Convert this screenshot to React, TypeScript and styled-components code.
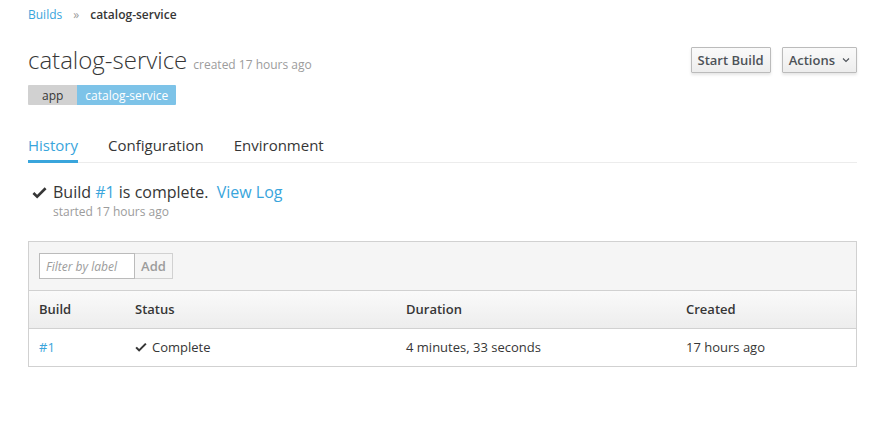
import React from "react";
import styled, { createGlobalStyle } from "styled-components";

const Global = createGlobalStyle`
  html, body { margin: 0; padding: 0; background: #fff; }
  body { font-family: "Open Sans", "Noto Sans", sans-serif; font-size: 12px; color: #363636; }
`;

const Page = styled.div`
  padding: 0 26px 0 28px;
  width: 883px;
  box-sizing: border-box;
`;

const Breadcrumb = styled.div`
  display: flex;
  align-items: center;
  gap: 11px;
  height: 28px;
  font-size: 12px;
`;

const Crumb = styled.a`
  color: #39a5dc;
  text-decoration: none;
`;

const Sep = styled.span`
  color: #9c9c9c;
  font-size: 12px;
`;

const Current = styled.span`
  font-weight: 600;
  color: #363636;
`;

const Header = styled.div`
  display: flex;
  justify-content: space-between;
  align-items: flex-start;
  margin-top: 17px;
`;

const TitleRow = styled.div`
  display: flex;
  align-items: baseline;
  gap: 6px;
`;

const Title = styled.h1`
  margin: 0;
  font-size: 24px;
  font-weight: 300;
  line-height: 30px;
  color: #363636;
`;

const Small = styled.span`
  font-size: 12px;
  color: #9c9c9c;
`;

const Buttons = styled.div`
  display: flex;
  gap: 11px;
  margin-top: 2px;
`;

const Button = styled.button`
  font-family: "Open Sans", sans-serif;
  font-size: 13px;
  font-weight: 600;
  color: #4d5258;
  height: 26px;
  padding: 0 6px;
  border: 1px solid #bbb;
  border-radius: 1px;
  background: linear-gradient(#fafafa, #ededed);
  box-shadow: 0 2px 3px rgba(3, 3, 3, 0.1);
  display: flex;
  align-items: center;
  gap: 7px;
`;

const Labels = styled.div`
  display: flex;
  margin-top: 10px;
`;

const Label = styled.span<{ $blue?: boolean }>`
  display: inline-flex;
  align-items: center;
  height: 20px;
  padding: 0 ${(p) => (p.$blue ? "8px" : "14px")};
  font-size: 12px;
  background: ${(p) => (p.$blue ? "#7dc3e8" : "#d1d1d1")};
  color: ${(p) => (p.$blue ? "#fff" : "#363636")};
  border-radius: ${(p) => (p.$blue ? "0 1px 1px 0" : "1px 0 0 1px")};
`;

const Tabs = styled.div`
  display: flex;
  gap: 30px;
  margin-top: 24px;
  border-bottom: 1px solid #ececec;
`;

const Tab = styled.div<{ $active?: boolean }>`
  font-size: 15px;
  line-height: 22px;
  height: 34px;
  padding-top: 5px;
  box-sizing: border-box;
  color: ${(p) => (p.$active ? "#39a5dc" : "#363636")};
  border-bottom: 3px solid ${(p) => (p.$active ? "#39a5dc" : "transparent")};
  margin-bottom: -1px;
`;

const Status = styled.div`
  margin-top: 18px;
  margin-left: 4px;
`;

const StatusLine = styled.div`
  display: flex;
  align-items: center;
  font-size: 16px;
  line-height: 22px;
  gap: 6px;
`;

const Link = styled.a`
  color: #39a5dc;
  text-decoration: none;
`;

const Started = styled.div`
  margin-left: 21px;
  font-size: 12px;
  color: #9c9c9c;
  line-height: 18px;
`;

const TableBox = styled.div`
  margin-top: 20px;
  border: 1px solid #d1d1d1;
`;

const Toolbar = styled.div`
  background: #f5f5f5;
  height: 48px;
  padding: 0 10px;
  display: flex;
  align-items: center;
  border-bottom: 1px solid #d1d1d1;
`;

const Input = styled.input`
  width: 96px;
  height: 26px;
  box-sizing: border-box;
  border: 1px solid #bbb;
  padding: 0 6px;
  font-family: "Open Sans", sans-serif;
  font-size: 12px;
  font-style: italic;
  background: #fff;
  &::placeholder { color: #9c9c9c; }
`;

const AddButton = styled.button`
  height: 26px;
  width: 38px;
  font-family: "Open Sans", sans-serif;
  font-weight: 600;
  font-size: 13px;
  color: #9c9c9c;
  border: 1px solid #d1d1d1;
  border-left: none;
  background: #f5f5f5;
`;

const Table = styled.table`
  width: 100%;
  border-collapse: collapse;
  table-layout: fixed;
  font-size: 13px;
`;

const Th = styled.th<{ $w?: number }>`
  box-sizing: border-box;
  text-align: left;
  font-weight: 600;
  height: 37px;
  padding: 0 10px;
  background: linear-gradient(#fafafa, #ededed);
  border-bottom: 1px solid #d1d1d1;
  width: ${(p) => (p.$w ? `${p.$w}px` : "auto")};
`;

const Td = styled.td`
  height: 37px;
  padding: 0 10px;
  color: #363636;
`;

const Check = ({ size = 13 }: { size?: number }) => (
  <svg width={size} height={size} viewBox="0 0 16 16">
    <path d="M1.5 8.5 L5.5 12.5 L14.5 3.5" fill="none" stroke="#363636" strokeWidth="2.8" />
  </svg>
);

const Chevron = () => (
  <svg width="8" height="6" viewBox="0 0 8 6">
    <path d="M1 1.5 L4 4.5 L7 1.5" fill="none" stroke="#4d5258" strokeWidth="1.1" />
  </svg>
);

const Cell = styled.span`
  display: inline-flex;
  align-items: center;
  gap: 5px;
`;

export default function App() {
  return (
    <>
      <Global />
      <Page>
        <Breadcrumb>
          <Crumb>Builds</Crumb>
          <Sep>»</Sep>
          <Current>catalog-service</Current>
        </Breadcrumb>
        <Header>
          <div>
            <TitleRow>
              <Title>catalog-service</Title>
              <Small>created 17 hours ago</Small>
            </TitleRow>
            <Labels>
              <Label>app</Label>
              <Label $blue>catalog-service</Label>
            </Labels>
          </div>
          <Buttons>
            <Button>Start Build</Button>
            <Button>
              Actions <Chevron />
            </Button>
          </Buttons>
        </Header>
        <Tabs>
          <Tab $active>History</Tab>
          <Tab>Configuration</Tab>
          <Tab>Environment</Tab>
        </Tabs>
        <Status>
          <StatusLine>
            <Check size={15} />
            <span>
              Build <Link>#1</Link> is complete.&nbsp; <Link>View Log</Link>
            </span>
          </StatusLine>
          <Started>started 17 hours ago</Started>
        </Status>
        <TableBox>
          <Toolbar>
            <Input placeholder="Filter by label" />
            <AddButton>Add</AddButton>
          </Toolbar>
          <Table>
            <thead>
              <tr>
                <Th $w={96}>Build</Th>
                <Th $w={271}>Status</Th>
                <Th $w={280}>Duration</Th>
                <Th>Created</Th>
              </tr>
            </thead>
            <tbody>
              <tr>
                <Td>
                  <Link>#1</Link>
                </Td>
                <Td>
                  <Cell>
                    <Check size={12} />
                    Complete
                  </Cell>
                </Td>
                <Td>4 minutes, 33 seconds</Td>
                <Td>17 hours ago</Td>
              </tr>
            </tbody>
          </Table>
        </TableBox>
      </Page>
    </>
  );
}
